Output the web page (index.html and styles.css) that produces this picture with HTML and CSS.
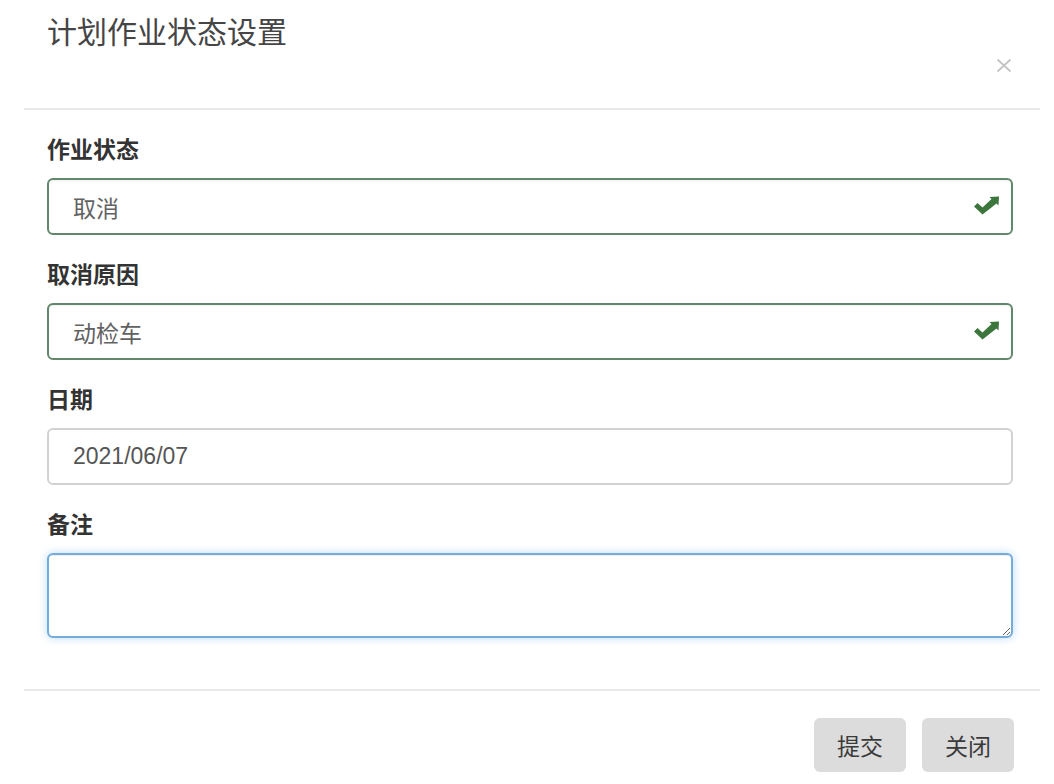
FILE: index.html
```html
<!DOCTYPE html>
<html lang="zh-CN">
<head>
<meta charset="utf-8">
<title>计划作业状态设置</title>
<link rel="stylesheet" href="styles.css">
</head>
<body>
<div class="modal">
  <div class="modal-header">
    <h4 class="modal-title">计划作业状态设置</h4>
    <button class="close" type="button" aria-label="关闭">
      <svg width="18" height="15" viewBox="0 0 18 15"><path d="M2.5 1.5 L15.5 13.5 M15.5 1.5 L2.5 13.5" stroke="#c4c4c4" stroke-width="1.8" fill="none"/></svg>
    </button>
  </div>
  <div class="modal-body">
    <div class="form-group">
      <label class="label">作业状态</label>
      <div class="field success">
        <div class="input">取消</div>
        <svg class="ok" width="27" height="19" viewBox="0 0 27 19"><path d="M1 10.5 L4.5 7 L9.5 11.5 L18.5 3 L16.5 1 L26 0.5 L25.5 9.5 L23.5 7.5 L9.5 18.5 Z" fill="#3c763d"/></svg>
      </div>
    </div>
    <div class="form-group">
      <label class="label">取消原因</label>
      <div class="field success">
        <div class="input">动检车</div>
        <svg class="ok" width="27" height="19" viewBox="0 0 27 19"><path d="M1 10.5 L4.5 7 L9.5 11.5 L18.5 3 L16.5 1 L26 0.5 L25.5 9.5 L23.5 7.5 L9.5 18.5 Z" fill="#3c763d"/></svg>
      </div>
    </div>
    <div class="form-group">
      <label class="label">日期</label>
      <div class="field">
        <div class="input date">2021/06/07</div>
      </div>
    </div>
    <div class="form-group">
      <label class="label">备注</label>
      <textarea class="textarea"></textarea>
    </div>
  </div>
  <div class="modal-footer">
    <button class="btn" type="button">提交</button>
    <button class="btn" type="button">关闭</button>
  </div>
</div>
</body>
</html>
```

FILE: styles.css
```css
* { box-sizing: border-box; }

html, body {
  margin: 0;
  padding: 0;
  background: #ffffff;
}

body {
  font-family: "Noto Sans CJK SC", "Liberation Sans", sans-serif;
  color: #333333;
}

.modal {
  margin-left: 24px;
  width: 1016px;
}

.modal-header {
  display: flex;
  flex-direction: column;
  padding: 9px 27px 35px 23px;
  border-bottom: 2px solid #e8e8e8;
}

.modal-title {
  margin: 0;
  font-size: 30px;
  line-height: 43px;
  font-weight: normal;
  color: #454545;
}

.close {
  align-self: flex-end;
  margin-top: 6px;
  padding: 0;
  border: 0;
  background: transparent;
  width: 18px;
  height: 15px;
  display: block;
}

.close svg { display: block; }

.modal-body {
  padding: 22px 27px 29px 23px;
}

.form-group {
  margin-bottom: 22px;
}

.label {
  display: block;
  font-size: 23px;
  line-height: 33px;
  font-weight: bold;
  color: #333333;
  margin-bottom: 13px;
}

.field {
  position: relative;
}

.input {
  height: 57px;
  border: 2px solid #d2d2d2;
  border-radius: 6px;
  padding: 0 24px;
  display: flex;
  align-items: center;
  font-size: 23px;
  color: #626262;
  background: #ffffff;
}

.success .input {
  border-color: #62876a;
  box-shadow: inset 0 1px 2px rgba(0, 0, 0, 0.06);
}

.date {
  font-family: "Liberation Sans", "Noto Sans CJK SC", sans-serif;
  color: #555555;
}

.ok {
  position: absolute;
  right: 13px;
  top: 18px;
}

.textarea {
  display: block;
  width: 100%;
  height: 85px;
  margin: 0;
  border: 2px solid #74acdc;
  border-radius: 6px;
  box-shadow: inset 0 1px 1px rgba(0, 0, 0, 0.075), 0 0 9px rgba(102, 175, 233, 0.45);
  font-family: "Noto Sans CJK SC", sans-serif;
  font-size: 23px;
  padding: 10px 24px;
  outline: none;
  resize: vertical;
}

.modal-footer {
  border-top: 2px solid #e8e8e8;
  padding: 27px 26px 20px 23px;
  display: flex;
  justify-content: flex-end;
  gap: 16px;
}

.btn {
  height: 54px;
  padding: 0 23px;
  border: 0;
  border-radius: 6px;
  background: #dcdcdc;
  font-family: "Noto Sans CJK SC", sans-serif;
  font-size: 23px;
  color: #3a3a3a;
}
```
